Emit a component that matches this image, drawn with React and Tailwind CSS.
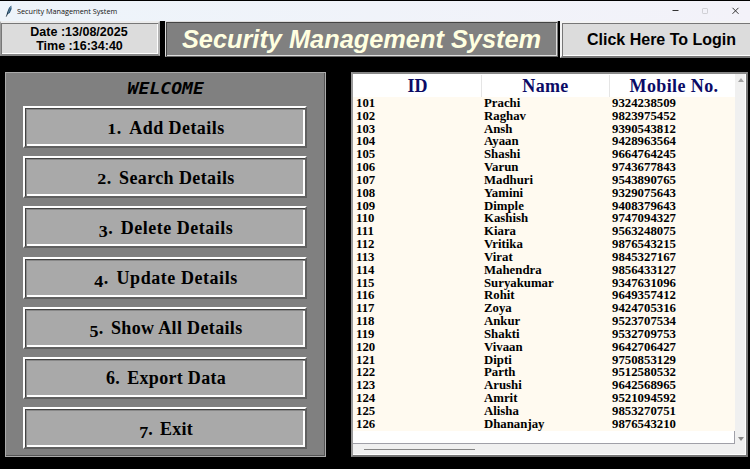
import React from "react";

const ROWS = [
  ["101", "Prachi", "9324238509"],
  ["102", "Raghav", "9823975452"],
  ["103", "Ansh", "9390543812"],
  ["104", "Ayaan", "9428963564"],
  ["105", "Shashi", "9664764245"],
  ["106", "Varun", "9743677843"],
  ["107", "Madhuri", "9543890765"],
  ["108", "Yamini", "9329075643"],
  ["109", "Dimple", "9408379643"],
  ["110", "Kashish", "9747094327"],
  ["111", "Kiara", "9563248075"],
  ["112", "Vritika", "9876543215"],
  ["113", "Virat", "9845327167"],
  ["114", "Mahendra", "9856433127"],
  ["115", "Suryakumar", "9347631096"],
  ["116", "Rohit", "9649357412"],
  ["117", "Zoya", "9424705316"],
  ["118", "Ankur", "9523707534"],
  ["119", "Shakti", "9532709753"],
  ["120", "Vivaan", "9642706427"],
  ["121", "Dipti", "9750853129"],
  ["122", "Parth", "9512580532"],
  ["123", "Arushi", "9642568965"],
  ["124", "Amrit", "9521094592"],
  ["125", "Alisha", "9853270751"],
  ["126", "Dhananjay", "9876543210"],
];

// Old-style figures: 1 and 2 sit at x-height, 3/4/5/7 descend, 6 ascends.
const SMALL = "inline-block origin-[0_17px] scale-y-[0.76]";
const DESCENDING = "inline-block origin-[0_17px] translate-y-[3px] scale-y-[0.95]";
const MENU = [
  ["1", "Add Details", SMALL, "tracking-[0.45px]"],
  ["2", "Search Details", SMALL, "tracking-[0.4px]"],
  ["3", "Delete Details", DESCENDING, "tracking-[0.5px]"],
  ["4", "Update Details", DESCENDING, "tracking-[0.55px]"],
  ["5", "Show All Details", DESCENDING, "tracking-[0.35px]"],
  ["6", "Export Data", "", "tracking-[0.3px]"],
  ["7", "Exit", DESCENDING, "tracking-[0.2px]"],
];

function TitleBar() {
  return (
    <header className="flex h-[21px] shrink-0 items-center border-t border-black bg-gradient-to-r from-[#edf4fa] to-[#f3f2f9] pl-[5px] pr-[10px]">
      <svg width="8" height="12" viewBox="0 0 8 12">
        <path d="M1.5 11.5 2 7.5 4 2.7 6.3.5 6.6 4 4.8 8 2.4 9.3Z" fill="#28577a" />
        <path d="M1.2 11.7 4.8 3.5" stroke="#101c27" strokeWidth=".7" />
        <path d="M3 8 5.8 2" stroke="#86abc1" strokeWidth=".6" />
      </svg>
      <span className="ml-[4px] origin-left scale-x-[0.945] whitespace-nowrap font-['Open_Sans',sans-serif] text-[7.7px] leading-[12px] text-[#111]">
        Security Management System
      </span>
      <svg className="ml-auto" width="70" height="12" viewBox="0 0 70 12" fill="none">
        <path d="M2.5 5.5h6" stroke="#333" />
        <rect x="32.5" y="3.5" width="5" height="5" rx=".6" stroke="#d0d0d5" />
        <path d="m62.5 2.8 6 6m0-6-6 6" stroke="#333" />
      </svg>
    </header>
  );
}

function Banner() {
  return (
    <div className="flex h-[37px] shrink-0 items-start font-['Liberation_Sans',sans-serif] font-bold">
      <div className="flex h-[35px] w-[160px] flex-col items-center justify-center border-2 border-l border-t-[#ececec] border-l-[#999] border-r-[#b5b5b5] border-b-[#858585] bg-[#dcdcdc] text-[12.5px] leading-[14px] text-black shadow-[inset_1px_1px_0_#777,inset_-1px_-1px_0_#fff]">
        <span className="whitespace-nowrap pr-[1px]">Date :13/08/2025</span>
        <span className="whitespace-nowrap">Time :16:34:40</span>
      </div>
      <div className="ml-[5px] flex h-[36px] w-[393px] items-center justify-center border border-t-[#ddd] border-l-[#ddd] border-r-[#777] border-b-[#666] bg-[#808080] shadow-[inset_1px_1px_0_#444,inset_-1px_-1px_0_#ddd]">
        <span className="whitespace-nowrap text-[25.35px] italic leading-[30px] text-[#ffffe0]">
          Security Management System
        </span>
      </div>
      <div className="ml-[2px] flex h-[37px] w-[190px] items-center border-2 border-r-0 border-t-[#f4f4f4] border-l-[#f4f4f4] border-b-[#777] bg-[#dcdcdc] pl-[25px] text-[16px] text-black shadow-[inset_1px_1px_0_#777,inset_0_-1px_0_#fff]">
        <span className="whitespace-nowrap">Click Here To Login</span>
      </div>
    </div>
  );
}

function MenuPanel() {
  return (
    <nav className="flex h-[385px] w-[321px] shrink-0 flex-col border border-[#aaa] bg-[#808080] px-[17px] shadow-[inset_-1px_-1px_0_#555]">
      <h2 className="flex h-[33px] items-center justify-center pb-[2px] font-['DejaVu_Sans_Mono',monospace] text-[16px] font-bold italic text-black">
        <span className="scale-x-[1.13] whitespace-nowrap">WELCOME</span>
      </h2>
      <div className="flex flex-col gap-[8.2px]">
        {MENU.map(([n, label, digit, tracking]) => (
          <button
            key={n}
            className="flex h-[42px] w-[284px] items-center justify-center border-2 border-t-white border-l-white border-r-[#606060] border-b-[#606060] bg-[#a9a9a9] pt-[1px] shadow-[inset_1px_1px_0_#444,inset_2px_2px_0_#888,inset_-2px_-2px_0_#fff]"
          >
            <span className={"flex whitespace-pre pl-[2px] font-['Liberation_Serif',serif] text-[18px] font-bold leading-[22px] text-black " + tracking}>
              <span className={digit}>{n}</span>
              <span className="[word-spacing:-1.2px]">{".  "}</span>
              <span>{label}</span>
            </span>
          </button>
        ))}
      </div>
    </nav>
  );
}

function Records() {
  return (
    <section className="flex h-[385px] w-[397px] shrink-0 flex-col border-2 border-t-[#888] border-l-[#999] border-r-[#777] border-b-[#777] bg-[#f0f0f0] shadow-[inset_-1px_-1px_0_#fff]">
      <div className="flex h-[370px]">
        <div className="flex w-[382px] flex-col border-b border-r border-[#a0a0a8] bg-white font-['Liberation_Serif',serif] font-bold">
          <div className="-mr-px flex h-[23px] shrink-0 items-center bg-white text-[18px] leading-[22px] text-[#0b0b66]">
            <div className="flex w-[128px] justify-center pl-[1px]">ID</div>
            <div className="flex w-[128px] justify-center border-l border-[#e5e5e5] tracking-[0.35px]">Name</div>
            <div className="flex w-[126px] justify-center whitespace-nowrap border-l border-[#e5e5e5] pl-[3px] tracking-[0.4px]">Mobile No.</div>
          </div>
          <div className="-mr-px bg-[#fffaf0]">
            {ROWS.map(([id, name, mobile]) => (
              <div key={id} className="flex h-[12.83px] items-center pl-[3px] text-[12.8px] leading-[12.83px] text-black">
                <span className="w-[128px]">{id}</span>
                <span className="w-[128px]">{name}</span>
                <span>{mobile}</span>
              </div>
            ))}
          </div>
        </div>
        <div className="flex w-[11px] flex-col items-center justify-between py-[3px] pt-[4px]">
          <svg width="6" height="4"><path d="M0 4 3 0 6 4Z" fill="#a0a0a0" /></svg>
          <svg width="6" height="4"><path d="M0 0 3 4 6 0Z" fill="#888" /></svg>
        </div>
      </div>
      <div className="flex flex-1 items-start pl-[11px] pt-[5px]">
        <div className="h-px w-[111px] bg-[#858585]" />
      </div>
    </section>
  );
}

export default function App() {
  return (
    <div className="flex h-[469px] w-[750px] flex-col overflow-hidden bg-black">
      <TitleBar />
      <Banner />
      <main className="flex gap-[25px] pl-[5px] pt-[14px]">
        <MenuPanel />
        <Records />
      </main>
    </div>
  );
}
